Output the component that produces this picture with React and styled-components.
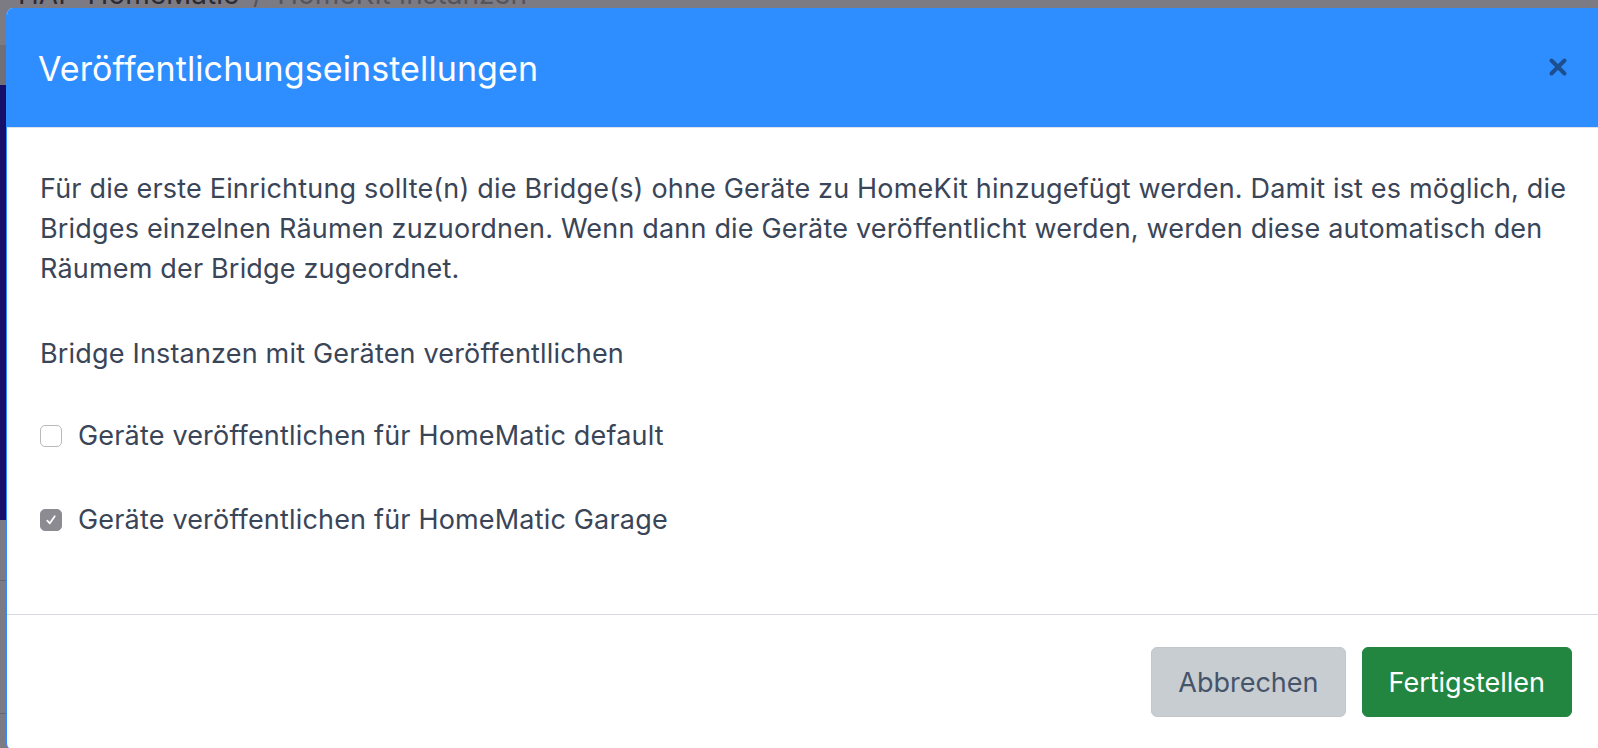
import React from "react";
import styled, { createGlobalStyle } from "styled-components";

const GlobalStyle = createGlobalStyle`
  html, body {
    margin: 0;
    padding: 0;
    width: 1598px;
    height: 748px;
    overflow: hidden;
    background: #7c7b83;
    font-family: Inter, "Noto Sans", "Liberation Sans", sans-serif;
  }
  #root {
    position: relative;
    width: 1598px;
    height: 748px;
  }
`;

const Page = styled.div`
  display: grid;
  grid-template-columns: 6px 1fr;
  width: 1598px;
  height: 748px;
  background: #7c7b83;
`;

const SideRail = styled.div`
  display: flex;
  flex-direction: column;
`;

const RailPart = styled.div`
  height: ${(p) => p.$h}px;
  background: ${(p) => p.$bg};
  border-bottom: ${(p) => (p.$line ? "1px solid #67666d" : "none")};
`;

const Crumbs = styled.div`
  padding-left: 12px;
  margin-top: -22px;
  font-size: 28px;
  line-height: 32px;
  white-space: nowrap;
  color: #2b2a30;
`;

const Sep = styled.span`
  margin: 0 14px;
  color: #55545b;
`;

const CrumbMuted = styled.span`
  color: #55545b;
`;

const Modal = styled.div`
  position: absolute;
  left: 6px;
  top: 8px;
  width: 1598px;
  height: 742px;
  display: flex;
  flex-direction: column;
  background: #fff;
  border-radius: 7px;
  border-left: 1px solid #2e8eff;
  overflow: hidden;
  box-sizing: border-box;
`;

const Header = styled.div`
  height: 120px;
  flex: none;
  display: flex;
  align-items: center;
  justify-content: space-between;
  padding: 0 36px 0 31px;
  background: #2e8eff;
  border-bottom: 1px solid #dee2e6;
  box-sizing: border-box;
`;

const Title = styled.h1`
  margin: 2px 0 0;
  font-size: 34px;
  font-weight: 400;
  color: #fff;
  letter-spacing: 0.1px;
`;

const Close = styled.button`
  display: flex;
  padding: 0;
  border: none;
  background: none;
  margin-top: -2px;
  width: 20px;
  height: 20px;
`;

const Body = styled.div`
  flex: none;
  height: 487px;
  padding: 41px 32px 0 33px;
  box-sizing: border-box;
  color: #3a4558;
  font-size: 27px;
  line-height: 40px;
  letter-spacing: 0.18px;
  border-bottom: 1px solid #d6d9dd;
`;

const Para = styled.p`
  margin: 0 0 45px;
  max-width: 1530px;
`;

const Lead = styled.p`
  margin: 0 0 42px;
`;

const CheckRow = styled.label`
  display: flex;
  align-items: center;
  gap: 16px;
  height: 40px;
  margin-bottom: 44px;
`;

const Box = styled.span`
  width: 22px;
  height: 22px;
  flex: none;
  box-sizing: border-box;
  border-radius: 5px;
  display: flex;
  align-items: center;
  justify-content: center;
  background: ${(p) => (p.$on ? "#8c8b92" : "#fff")};
  border: 1px solid ${(p) => (p.$on ? "#8c8b92" : "#b9b9be")};
`;

const Footer = styled.div`
  display: flex;
  justify-content: flex-end;
  gap: 16px;
  padding: 32px 32px 0;
`;

const Button = styled.button`
  height: 70px;
  padding: 0 26px;
  border-radius: 6px;
  font-family: inherit;
  font-size: 27px;
  border: 1px solid ${(p) => (p.$primary ? "#228640" : "#c2c7cc")};
  background: ${(p) => (p.$primary ? "#228640" : "#c8cdd2")};
  color: ${(p) => (p.$primary ? "#fff" : "#46546a")};
`;

function Check({ on }) {
  return (
    <Box $on={on}>
      {on && (
        <svg width="14" height="14" viewBox="0 0 12 12">
          <path d="M2.8 6.6 L5 8.8 L9.2 2.8" fill="none" stroke="#fff" strokeWidth="1.5" strokeLinecap="round" strokeLinejoin="round" />
        </svg>
      )}
    </Box>
  );
}

export default function App() {
  return (
    <>
      <GlobalStyle />
      <Page>
        <SideRail>
          <RailPart $h={45} $bg="#7c7b83" />
          <RailPart $h={40} $bg="#706f76" />
          <RailPart $h={435} $bg="#15106a" />
          <RailPart $h={60} $bg="#7c7b83" $line />
          <RailPart $h={132} $bg="#7c7b83" $line />
        </SideRail>
        <Crumbs>
          HAP-HomeMatic<Sep>/</Sep>
          <CrumbMuted>HomeKit Instanzen</CrumbMuted>
        </Crumbs>
      </Page>
      <Modal>
        <Header>
          <Title>Veröffentlichungseinstellungen</Title>
          <Close aria-label="Schließen">
            <svg width="20" height="20" viewBox="0 0 20 20">
              <path d="M3.5 3.5 L16.5 16.5 M16.5 3.5 L3.5 16.5" stroke="#1d4e8d" strokeWidth="4" strokeLinecap="round" />
            </svg>
          </Close>
        </Header>
        <Body>
          <Para>
            Für die erste Einrichtung sollte(n) die Bridge(s) ohne Geräte zu HomeKit hinzugefügt werden. Damit ist es möglich, die
            Bridges einzelnen Räumen zuzuordnen. Wenn dann die Geräte veröffentlicht werden, werden diese automatisch den Räumem der
            Bridge zugeordnet.
          </Para>
          <Lead>Bridge Instanzen mit Geräten veröffentllichen</Lead>
          <CheckRow>
            <Check on={false} />
            Geräte veröffentlichen für HomeMatic default
          </CheckRow>
          <CheckRow>
            <Check on />
            Geräte veröffentlichen für HomeMatic Garage
          </CheckRow>
        </Body>
        <Footer>
          <Button>Abbrechen</Button>
          <Button $primary>Fertigstellen</Button>
        </Footer>
      </Modal>
    </>
  );
}
